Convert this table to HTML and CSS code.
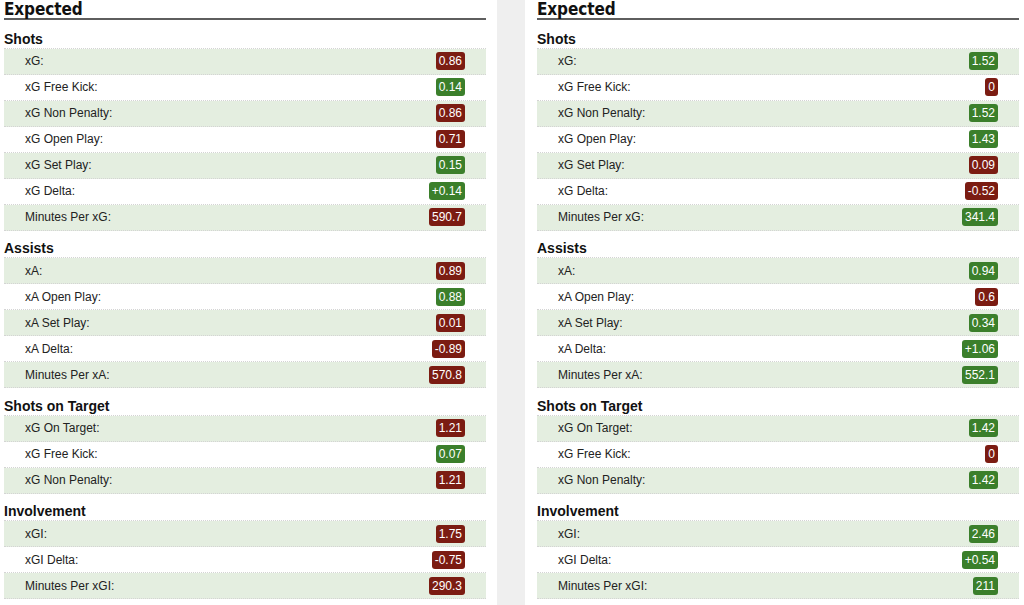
FILE: index.html
```html
<!DOCTYPE html>
<html>
<head>
<meta charset="utf-8">
<link rel="stylesheet" href="styles.css">
</head>
<body>
<div class="page">
  <div class="col">
    <div class="head">Expected</div>
    <div class="title">Shots</div>
    <div class="rows">
      <div class="row"><span>xG:</span><b class="bad">0.86</b></div>
      <div class="row"><span>xG Free Kick:</span><b class="good">0.14</b></div>
      <div class="row"><span>xG Non Penalty:</span><b class="bad">0.86</b></div>
      <div class="row"><span>xG Open Play:</span><b class="bad">0.71</b></div>
      <div class="row"><span>xG Set Play:</span><b class="good">0.15</b></div>
      <div class="row"><span>xG Delta:</span><b class="good">+0.14</b></div>
      <div class="row"><span>Minutes Per xG:</span><b class="bad">590.7</b></div>
    </div>
    <div class="title">Assists</div>
    <div class="rows">
      <div class="row"><span>xA:</span><b class="bad">0.89</b></div>
      <div class="row"><span>xA Open Play:</span><b class="good">0.88</b></div>
      <div class="row"><span>xA Set Play:</span><b class="bad">0.01</b></div>
      <div class="row"><span>xA Delta:</span><b class="bad">-0.89</b></div>
      <div class="row"><span>Minutes Per xA:</span><b class="bad">570.8</b></div>
    </div>
    <div class="title">Shots on Target</div>
    <div class="rows">
      <div class="row"><span>xG On Target:</span><b class="bad">1.21</b></div>
      <div class="row"><span>xG Free Kick:</span><b class="good">0.07</b></div>
      <div class="row"><span>xG Non Penalty:</span><b class="bad">1.21</b></div>
    </div>
    <div class="title">Involvement</div>
    <div class="rows">
      <div class="row"><span>xGI:</span><b class="bad">1.75</b></div>
      <div class="row"><span>xGI Delta:</span><b class="bad">-0.75</b></div>
      <div class="row"><span>Minutes Per xGI:</span><b class="bad">290.3</b></div>
    </div>
  </div>
  <div class="gutter"></div>
  <div class="col">
    <div class="head">Expected</div>
    <div class="title">Shots</div>
    <div class="rows">
      <div class="row"><span>xG:</span><b class="good">1.52</b></div>
      <div class="row"><span>xG Free Kick:</span><b class="bad">0</b></div>
      <div class="row"><span>xG Non Penalty:</span><b class="good">1.52</b></div>
      <div class="row"><span>xG Open Play:</span><b class="good">1.43</b></div>
      <div class="row"><span>xG Set Play:</span><b class="bad">0.09</b></div>
      <div class="row"><span>xG Delta:</span><b class="bad">-0.52</b></div>
      <div class="row"><span>Minutes Per xG:</span><b class="good">341.4</b></div>
    </div>
    <div class="title">Assists</div>
    <div class="rows">
      <div class="row"><span>xA:</span><b class="good">0.94</b></div>
      <div class="row"><span>xA Open Play:</span><b class="bad">0.6</b></div>
      <div class="row"><span>xA Set Play:</span><b class="good">0.34</b></div>
      <div class="row"><span>xA Delta:</span><b class="good">+1.06</b></div>
      <div class="row"><span>Minutes Per xA:</span><b class="good">552.1</b></div>
    </div>
    <div class="title">Shots on Target</div>
    <div class="rows">
      <div class="row"><span>xG On Target:</span><b class="good">1.42</b></div>
      <div class="row"><span>xG Free Kick:</span><b class="bad">0</b></div>
      <div class="row"><span>xG Non Penalty:</span><b class="good">1.42</b></div>
    </div>
    <div class="title">Involvement</div>
    <div class="rows">
      <div class="row"><span>xGI:</span><b class="good">2.46</b></div>
      <div class="row"><span>xGI Delta:</span><b class="good">+0.54</b></div>
      <div class="row"><span>Minutes Per xGI:</span><b class="good">211</b></div>
    </div>
  </div>
</div>
</body>
</html>
```
FILE: styles.css
```css
html, body {
  margin: 0;
  padding: 0;
  background: #fff;
}
body {
  font-family: "Liberation Sans", Arial, sans-serif;
  color: #222;
  height: 605px;
  overflow: hidden;
}
.page {
  display: flex;
  align-items: stretch;
  height: 605px;
  padding-left: 4px;
}
.col {
  width: 482px;
  flex: none;
}
.gutter {
  width: 28px;
  flex: none;
  background: #efefef;
  margin: 0 12px 0 11px;
}
.head {
  font-family: "DejaVu Sans Condensed", "DejaVu Sans", sans-serif;
  font-stretch: condensed;
  font-weight: bold;
  font-size: 17px;
  line-height: 17px;
  padding-top: 1px;
  color: #111;
  border-bottom: 2px solid #5e5e5e;
  letter-spacing: -0.1px;
}
.title {
  font-weight: bold;
  font-size: 14px;
  line-height: 18px;
  padding-top: 8.5px;
  color: #111;
}
.title:nth-child(2) {
  padding-top: 9.5px;
}
.rows {
  border-top: 1px dotted #d4d4d4;
}
.row {
  display: flex;
  justify-content: space-between;
  align-items: center;
  height: 25px;
  border-bottom: 1px dotted #d4d4d4;
  padding: 0 21px;
  font-size: 12px;
}
.row:nth-child(odd) {
  background: #e4eee0;
}
.row b {
  font-weight: normal;
  color: #fff;
  font-size: 12px;
  line-height: 18px;
  padding: 0 3px;
  border-radius: 3px;
}
.bad {
  background: #7b1c12;
}
.good {
  background: #3b7f2b;
}
```
